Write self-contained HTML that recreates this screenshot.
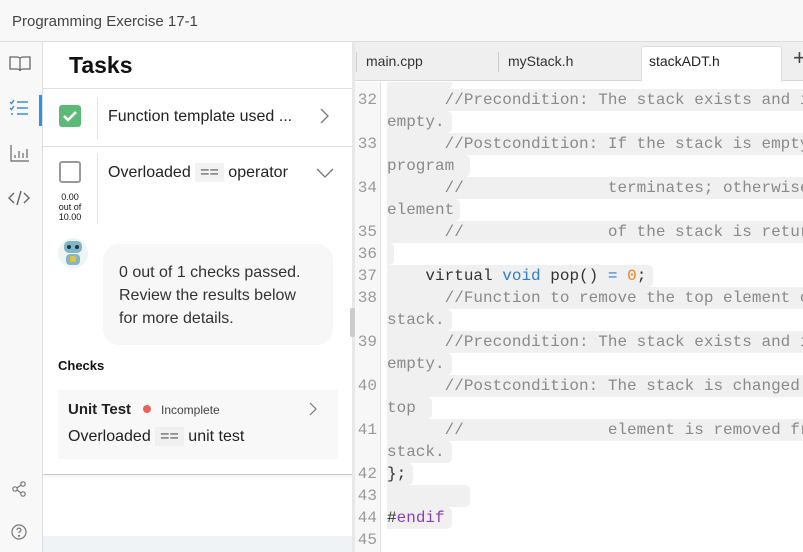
<!DOCTYPE html>
<html><head><meta charset="utf-8"><style>
*{box-sizing:border-box;margin:0;padding:0}
body{width:803px;height:552px;overflow:hidden;background:#fff;font-family:"Liberation Sans",sans-serif;color:#222;position:relative}
.a{position:absolute}
.title{left:0;top:0;width:803px;height:42px;background:#f8f8f8;border-bottom:1px solid #ddd}
.side{left:0;top:42px;width:43px;height:510px;background:#f8f8f8;border-right:1px solid #ddd}
.panel{left:43px;top:42px;width:310px;height:510px;background:#fff}
.code{font-family:"Liberation Mono",monospace;font-size:16px;color:#8a8a8a;white-space:pre;line-height:22px}
.ln{left:355px;width:25px;text-align:right;padding-right:3px;color:#999;background:#f7f7f7}
.row{left:387px;height:22px;background:#f0f0f0;border-radius:0 5px 5px 0}
.txt{left:387px}
</style></head><body>
<div class="a title"><div class="a" style="left:12px;top:13px;font-size:15px;color:#444">Programming Exercise 17-1</div></div>
<div class="a side">
<svg class="a" style="left:9px;top:13px" width="22" height="18" viewBox="0 0 22 18" fill="none" stroke="#666" stroke-width="1.3"><path d="M1 2h7c2 0 3 1 3 2v12c0-1-1-2-3-2H1z M21 2h-7c-2 0-3 1-3 2v12c0-1 1-2 3-2h7z"/></svg>
<svg class="a" style="left:9px;top:57px" width="20" height="18" viewBox="0 0 20 18" fill="none" stroke="#3b8fd9" stroke-width="1.4"><path d="M1 3l1.5 1.5L5 1M1 9l1.5 1.5L5 7M8 3h11M8 9h11M8 15h11M2 15h2"/></svg>
<div class="a" style="left:39px;top:53px;width:3px;height:31px;background:#3b8fd9"></div>
<svg class="a" style="left:10px;top:102px" width="20" height="18" viewBox="0 0 20 18" fill="none" stroke="#666" stroke-width="1.2"><path d="M1 1v16h18M5 14v-3M9 14v-7M13 14v-5M17 14v-9"/></svg>
<svg class="a" style="left:8px;top:148px" width="22" height="16" viewBox="0 0 22 16" fill="none" stroke="#666" stroke-width="1.4"><path d="M6 3L1 8l5 5M16 3l5 5-5 5M13 1L9 15"/></svg>
<svg class="a" style="left:12px;top:439px" width="14" height="16" viewBox="0 0 14 16" fill="none" stroke="#777" stroke-width="1.2"><circle cx="3" cy="8" r="2.2"/><circle cx="11" cy="3" r="2.2"/><circle cx="11" cy="13" r="2.2"/><path d="M5 7l4-3M5 9l4 3"/></svg>
<svg class="a" style="left:11px;top:482px" width="16" height="16" viewBox="0 0 16 16" fill="none" stroke="#777" stroke-width="1.2"><circle cx="8" cy="8" r="7"/><path d="M6 6c0-2.5 4-2.5 4 0 0 1.5-2 1.5-2 3"/><circle cx="8" cy="11.8" r=".5" fill="#777"/></svg>
</div>
<div class="a panel">
<div class="a" style="left:26px;top:10px;font-size:23px;font-weight:bold;color:#111">Tasks</div>
<div class="a" style="left:0;top:46px;width:310px;border-top:1px solid #ddd"></div>
<div class="a" style="left:16px;top:63px;width:22px;height:22px;background:#5dba76;border-radius:3px"><svg width="22" height="22"><path d="M5 11l4 4 8-8" fill="none" stroke="#fff" stroke-width="2.6"/></svg></div>
<div class="a" style="left:54px;top:56px;height:42px;border-left:1px solid #e4e4e4"></div>
<div class="a" style="left:65px;top:66px;font-size:16px">Function template used ...</div>
<svg class="a" style="left:276px;top:66px" width="10" height="16"><path d="M2 1l7 7-7 7" fill="none" stroke="#777" stroke-width="1.3"/></svg>
<div class="a" style="left:0;top:104px;width:310px;border-top:1px solid #ddd"></div>
<div class="a" style="left:16px;top:119px;width:22px;height:22px;border:2px solid #999;border-radius:3px"></div>
<div class="a" style="left:10px;top:150px;width:34px;text-align:center;font-size:9px;line-height:10px;color:#111">0.00<br>out of<br>10.00</div>
<div class="a" style="left:54px;top:112px;height:70px;border-left:1px solid #e4e4e4"></div>
<div class="a" style="left:65px;top:122px;font-size:16px">Overloaded <span style="background:#f2f2f2;padding:1px 5px;color:#555">==</span> operator</div>
<svg class="a" style="left:273px;top:126px" width="18" height="10"><path d="M1 1l8 8 8-8" fill="none" stroke="#777" stroke-width="1.3"/></svg>
<svg class="a" style="left:15px;top:195px" width="30" height="32" viewBox="0 0 30 32"><circle cx="15" cy="16" r="15" fill="#eef3f4"/><rect x="6" y="4" width="18" height="12" rx="5" fill="#7fb8c4"/><circle cx="11" cy="10" r="2" fill="#234"/><circle cx="19" cy="10" r="2" fill="#234"/><rect x="8" y="17" width="14" height="11" rx="4" fill="#7fb8c4"/><rect x="12" y="19" width="6" height="6" rx="1" fill="#e6c23a"/></svg>
<div class="a" style="left:60px;top:202px;width:230px;height:101px;background:#f7f7f7;border-radius:16px"></div>
<div class="a" style="left:76px;top:219px;font-size:16px;line-height:23px;color:#333">0 out of 1 checks passed.<br>Review the results below<br>for more details.</div>
<div class="a" style="left:15px;top:316px;font-size:13px;font-weight:bold;color:#111">Checks</div>
<div class="a" style="left:15px;top:348px;width:280px;height:69px;background:#f8f8f8"></div>
<div class="a" style="left:25px;top:359px;font-size:15px;font-weight:bold;color:#222">Unit Test</div>
<div class="a" style="left:100px;top:363px;width:8px;height:8px;border-radius:50%;background:#e86060"></div>
<div class="a" style="left:118px;top:361px;font-size:12px;color:#444">Incomplete</div>
<svg class="a" style="left:265px;top:360px" width="10" height="16"><path d="M2 1l6 6-6 6" fill="none" stroke="#777" stroke-width="1.2"/></svg>
<div class="a" style="left:25px;top:386px;font-size:16px">Overloaded <span style="background:#f0f0f0;padding:1px 5px;color:#555">==</span> unit test</div>
<div class="a" style="left:0;top:432px;width:310px;border-top:1px solid #ccc;box-shadow:0 1px 2px #ddd"></div>
<div class="a" style="left:0;top:494px;width:310px;height:16px;background:#f0f3f6"></div>
</div>
<div class="a" style="left:352px;top:42px;width:3px;height:510px;background:#e8e8e8"></div>
<div class="a" style="left:350px;top:308px;width:5px;height:29px;background:#ccc;border-radius:2px"></div>
<div class="a" style="left:355px;top:42px;width:448px;height:39px;background:#efefef;border-bottom:1px solid #d8d8d8"></div>
<div class="a" style="left:356px;top:52px;height:20px;border-left:1px solid #ccc"></div>
<div class="a" style="left:366px;top:53px;font-size:14px;color:#333">main.cpp</div>
<div class="a" style="left:498px;top:52px;height:20px;border-left:1px solid #ccc"></div>
<div class="a" style="left:508px;top:53px;font-size:14px;color:#333">myStack.h</div>
<div class="a" style="left:641px;top:46px;width:141px;height:36px;background:#fff;border:1px solid #ddd;border-bottom:none;border-radius:3px 3px 0 0"></div>
<div class="a" style="left:649px;top:53px;font-size:14px;color:#222">stackADT.h</div>
<div class="a" style="left:793px;top:45px;font-size:22px;color:#444">+</div>
<div class="a" style="left:355px;top:82px;width:26px;height:470px;background:#f7f7f7;border-right:1px solid #e0e0e0"></div>
<div class="a" style="left:355px;top:82px;width:448px;height:470px;overflow:hidden">
<div style="position:relative;left:-355px;top:-82px">
<div class="a row" style="top:67px;width:65px"></div>
<div class="a row" style="top:89px;width:420px"></div>
<div class="a row" style="top:111px;width:65px"></div>
<div class="a row" style="top:133px;width:420px"></div>
<div class="a row" style="top:155px;width:83px"></div>
<div class="a row" style="top:177px;width:420px"></div>
<div class="a row" style="top:199px;width:73px"></div>
<div class="a row" style="top:221px;width:420px"></div>
<div class="a row" style="top:243px;width:7px"></div>
<div class="a row" style="top:265px;width:266px"></div>
<div class="a row" style="top:287px;width:420px"></div>
<div class="a row" style="top:309px;width:65px"></div>
<div class="a row" style="top:331px;width:420px"></div>
<div class="a row" style="top:353px;width:65px"></div>
<div class="a row" style="top:375px;width:420px"></div>
<div class="a row" style="top:397px;width:45px"></div>
<div class="a row" style="top:419px;width:420px"></div>
<div class="a row" style="top:441px;width:65px"></div>
<div class="a row" style="top:463px;width:26px"></div>
<div class="a row" style="top:485px;width:83px"></div>
<div class="a row" style="top:507px;width:65px"></div>
<div class="a code ln" style="top:89px">32

33

34

35
36
37
38

39

40

41

42
43
44
45</div>
<div class="a code txt" style="top:67px">stack.
      //Precondition: The stack exists and is not
empty.
      //Postcondition: If the stack is empty, the
program
      //               terminates; otherwise, the top
element
      //               of the stack is returned.

    <span style="color:#333">virtual</span> <span style="color:#2f7fc8">void</span> <span style="color:#333">pop()</span> <span style="color:#2f7fc8">=</span> <span style="color:#e8831c">0</span><span style="color:#333">;</span>
      //Function to remove the top element of the
stack.
      //Precondition: The stack exists and is not
empty.
      //Postcondition: The stack is changed and the
top
      //               element is removed from the
stack.
<span style="color:#333">};</span>

<span style="color:#333">#</span><span style="color:#8a3fc0">endif</span></div>
</div></div>
</body></html>
